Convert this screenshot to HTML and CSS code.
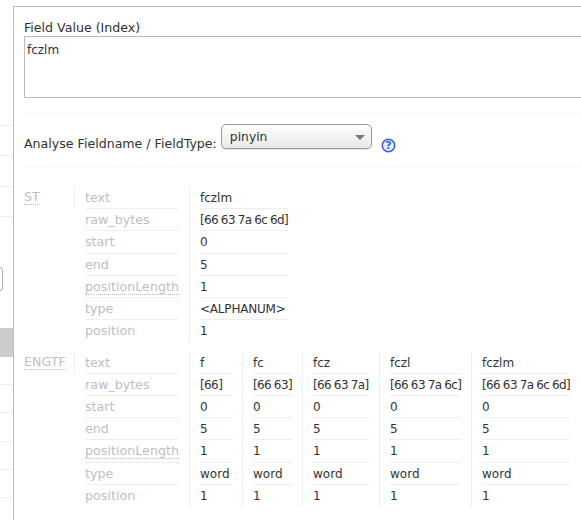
FILE: index.html
```html
<!DOCTYPE html>
<html lang="en">
<head>
<meta charset="utf-8">
<title>Analysis</title>
<link rel="stylesheet" href="styles.css">
</head>
<body>
<div class="page">
  <aside class="side">
    <div class="side-gap"></div>
    <div class="side-row h30"></div>
    <div class="side-row h31"></div>
    <div class="side-row h30"></div>
    <div class="side-row h112"><span class="side-box"></span></div>
    <div class="side-row active"></div>
    <div class="side-spacer"></div>
    <div class="side-row h28"></div>
    <div class="side-row h29"></div>
    <div class="side-row h28"></div>
    <div class="side-row h28"></div>
    <div class="side-row h24"></div>
  </aside>
  <main class="panel">
    <label class="lbl lbl-top">Field Value (Index)</label>
    <div class="area">fczlm</div>
    <div class="type-row">
      <span class="lbl">Analyse Fieldname / FieldType:</span>
      <span class="select">pinyin<i class="caret"></i></span>
      <svg class="help" width="15" height="15" viewBox="0 0 15 15"><circle cx="7.5" cy="7.5" r="6.2" fill="#e6ecfa" stroke="#3b5fd0" stroke-width="1.5"/><text x="7.5" y="11.3" text-anchor="middle" class="help-q">?</text></svg>
    </div>
    <section class="an">
      <div class="an-name"><abbr>ST</abbr></div>
      <div class="keys">
        <div>text</div><div>raw_bytes</div><div>start</div><div>end</div><div><abbr>positionLength</abbr></div><div>type</div><div>position</div>
      </div>
      <div class="vals w88"><div>fczlm</div><div class="bytes">[66 63 7a 6c 6d]</div><div>0</div><div>5</div><div>1</div><div class="tight">&lt;ALPHANUM&gt;</div><div>1</div></div>
    </section>
    <section class="an">
      <div class="an-name"><abbr>ENGTF</abbr></div>
      <div class="keys">
        <div>text</div><div>raw_bytes</div><div>start</div><div>end</div><div><abbr>positionLength</abbr></div><div>type</div><div>position</div>
      </div>
      <div class="vals w32"><div>f</div><div class="bytes">[66]</div><div>0</div><div>5</div><div>1</div><div>word</div><div>1</div></div>
      <div class="vals w39"><div>fc</div><div class="bytes">[66 63]</div><div>0</div><div>5</div><div>1</div><div>word</div><div>1</div></div>
      <div class="vals w56"><div>fcz</div><div class="bytes">[66 63 7a]</div><div>0</div><div>5</div><div>1</div><div>word</div><div>1</div></div>
      <div class="vals w71"><div>fczl</div><div class="bytes">[66 63 7a 6c]</div><div>0</div><div>5</div><div>1</div><div>word</div><div>1</div></div>
      <div class="vals w88"><div>fczlm</div><div class="bytes">[66 63 7a 6c 6d]</div><div>0</div><div>5</div><div>1</div><div>word</div><div>1</div></div>
    </section>
  </main>
</div>
</body>
</html>
```

FILE: styles.css
```css
* { box-sizing: border-box; }
html, body { margin: 0; height: 100%; background: #fff; overflow: hidden; }
body { font-family: "DejaVu Sans", Verdana, sans-serif; font-size: 12px; color: #333; }
.page { display: flex; height: 521px; width: 581px; }
.side { width: 13px; flex: none; display: flex; flex-direction: column; }
.side-gap { height: 125px; }
.side-row { border-top: 1px solid #eee; position: relative; }
.h24 { height: 24px; }
.h28 { height: 28px; }
.h29 { height: 29px; }
.h30 { height: 30px; }
.h31 { height: 31px; }
.h112 { height: 112px; }
.active { height: 29px; background: #ccc; border-top: 0; }
.side-spacer { height: 27px; }
.side-box { position: absolute; left: -6px; top: 50px; width: 9px; height: 24px; border: 1px solid #aaa; border-radius: 3px; }
.panel { flex: 1; border-left: 1px solid #bbb; border-top: 1px solid #bbb; margin-top: 6px; margin-bottom: 1px; padding: 13px 0 0 10px; min-width: 0; }
.lbl { font-size: 12.6px; color: #333; display: block; line-height: 16px; }
.area { height: 62px; border: 1px solid #bbb; border-right: 0; padding: 5px 2px; font-size: 12px; line-height: 17px; color: #333; }
.type-row { margin-top: 15px; border-top: 1px solid #f6f6f6; border-bottom: 1px solid #f6f6f6; height: 54px; display: flex; align-items: flex-start; }
.type-row .lbl { margin-top: 22px; }
.select { margin: 10px 0 0 4px; width: 151px; height: 25px; border: 1px solid #999; border-radius: 5px; background: linear-gradient(#fff, #e8e8e8); box-shadow: 0 1px 1px rgba(0,0,0,.12); padding: 0 8px; line-height: 24px; font-size: 12.3px; position: relative; }
.caret { position: absolute; right: 6px; top: 10px; border: 4px solid transparent; border-left-width: 5px; border-right-width: 5px; border-top: 5px solid #777; border-bottom: 0; }
.help { margin: 24px 0 0 9px; }
.help-q { font: bold 11px "DejaVu Sans", sans-serif; fill: #3b5fd0; }
.an { display: flex; margin-top: 20px; }
.an + .an { margin-top: 9.4px; }
.an-name { width: 51px; height: 21px; border-right: 1px solid #eee; color: #c0c0c0; font-size: 12.6px; line-height: 19px; flex: none; }
abbr { border-bottom: 1px dotted #bbb; text-decoration: none; }
.keys { width: 94px; margin-left: 10px; margin-right: 10px; color: #c0c0c0; flex: none; }
.keys div, .vals div { height: 22.2px; line-height: 22px; border-bottom: 1px solid #eee; white-space: nowrap; }
.keys div { font-size: 12.7px; }
.vals div { font-size: 12px; }
.vals div.bytes { letter-spacing: -0.6px; word-spacing: -0.5px; }
.vals div.tight { letter-spacing: -0.2px; }
.keys div:last-child, .vals div:last-child { border-bottom: 0; }
.vals { border-left: 1px solid #eee; padding-left: 10px; flex: none; margin-right: 10px; }
.w88 { width: 99px; }
.w32 { width: 43px; }
.w39 { width: 50px; }
.w56 { width: 67px; }
.w71 { width: 82px; }
```
